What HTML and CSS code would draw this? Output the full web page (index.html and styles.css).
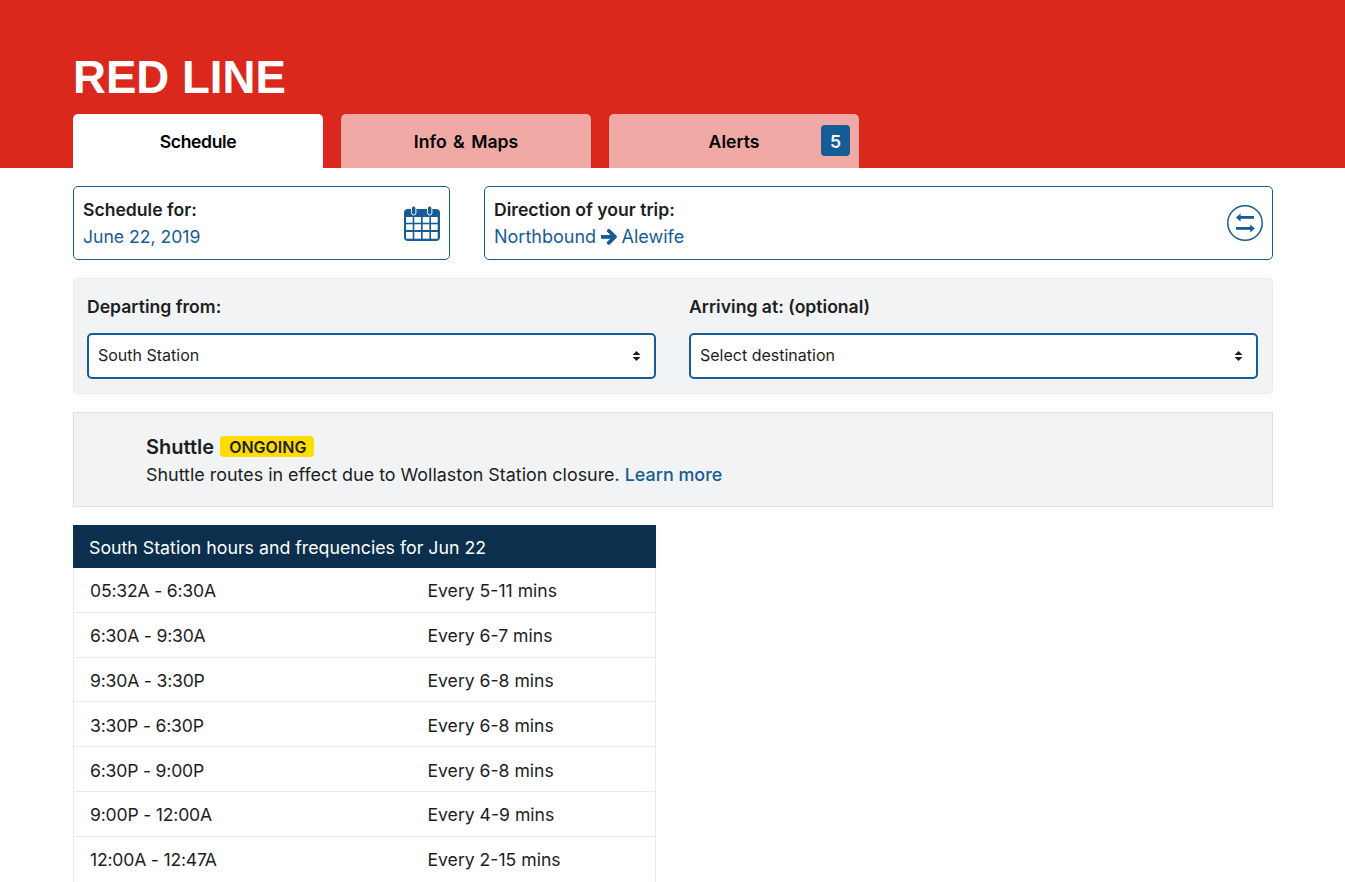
FILE: index.html

```html
<!DOCTYPE html>
<html lang="en">
<head>
    <meta charset="UTF-8">
    <meta name="viewport" content="width=device-width, initial-scale=1.0">
    <title>Red Line</title>
    <link rel="stylesheet" href="styles.css">
</head>
<body>
    <header class="header">
        <div class="wrap">
            <h1 class="title">RED LINE</h1>
            <nav class="tabs">
                <a class="tab tab-active">Schedule</a>
                <a class="tab">Info &amp; Maps</a>
                <a class="tab">Alerts<span class="tab-badge">5</span></a>
            </nav>
        </div>
    </header>
    <main class="wrap">
        <div class="pickers">
            <div class="picker picker-date">
                <div>
                    <div class="picker-label">Schedule for:</div>
                    <div class="picker-value">June 22, 2019</div>
                </div>
                <svg width="36" height="37" viewBox="0 0 36 37">
                    <rect x="0" y="4" width="36" height="32" rx="4" fill="#165c96"/>
                    <g fill="#fff">
                        <rect x="2" y="12" width="6.7" height="5.7"/>
                        <rect x="10.3" y="12" width="6.7" height="5.7"/>
                        <rect x="18.7" y="12" width="6.7" height="5.7"/>
                        <rect x="27" y="12" width="6.7" height="5.7"/>
                        <rect x="2" y="19.3" width="6.7" height="5.7"/>
                        <rect x="10.3" y="19.3" width="6.7" height="5.7"/>
                        <rect x="18.7" y="19.3" width="6.7" height="5.7"/>
                        <rect x="27" y="19.3" width="6.7" height="5.7"/>
                        <rect x="2" y="27" width="6.7" height="6.7"/>
                        <rect x="10.3" y="27" width="6.7" height="6.7"/>
                        <rect x="18.7" y="27" width="6.7" height="6.7"/>
                        <rect x="27" y="27" width="6.7" height="6.7"/>
                    </g>
                    <rect x="7.5" y="1" width="4.4" height="9" rx="2.2" fill="#165c96" stroke="#fff" stroke-width="1"/>
                    <rect x="23.5" y="1" width="4.4" height="9" rx="2.2" fill="#165c96" stroke="#fff" stroke-width="1"/>
                </svg>
            </div>
            <div class="picker picker-direction">
                <div>
                    <div class="picker-label">Direction of your trip:</div>
                    <div class="picker-value">Northbound
                        <svg class="icon-arrow" width="15.4" height="17.6" viewBox="0 0 448 512"><path fill="#165c96" stroke="#165c96" stroke-width="30" d="M190.5 66.9l22.2-22.2c9.4-9.4 24.6-9.4 33.9 0L441 239c9.4 9.4 9.4 24.6 0 33.9L246.6 467.3c-9.4 9.4-24.6 9.4-33.9 0l-22.2-22.2c-9.5-9.5-9.3-25 .4-34.3L311.4 296H24c-13.3 0-24-10.7-24-24v-32c0-13.3 10.7-24 24-24h287.4L190.9 101.2c-9.8-9.3-10-24.8-.4-34.3z"/></svg>
                        Alewife</div>
                </div>
                <svg width="36" height="36" viewBox="0 0 36 36">
                    <circle cx="18" cy="18" r="17.2" fill="none" stroke="#165c96" stroke-width="1.5"/>
                    <path d="M12 11h15v2.8H12z" fill="#165c96"/>
                    <path d="M9 12.4l4.6-4v8z" fill="#165c96"/>
                    <path d="M9 22h15v2.8H9z" fill="#165c96"/>
                    <path d="M27.8 23.4l-4.6-4v8z" fill="#165c96"/>
                </svg>
            </div>
        </div>

        <div class="stops">
            <div class="stop">
                <label class="stop-label" for="from">Departing from:</label>
                <div class="select">
                    <span id="from">South Station</span>
                    <svg width="9" height="12" viewBox="0 0 9 12"><path d="M4.5 1L8.5 5H.5zM4.5 11L.5 7h8z" fill="#1c1e23"/></svg>
                </div>
            </div>
            <div class="stop">
                <label class="stop-label" for="to">Arriving at: (optional)</label>
                <div class="select">
                    <span id="to">Select destination</span>
                    <svg width="9" height="12" viewBox="0 0 9 12"><path d="M4.5 1L8.5 5H.5zM4.5 11L.5 7h8z" fill="#1c1e23"/></svg>
                </div>
            </div>
        </div>

        <div class="alert">
            <div class="alert-head">Shuttle <span class="alert-tag">ONGOING</span></div>
            <div class="alert-text">Shuttle routes in effect due to Wollaston Station closure. <a class="alert-link">Learn more</a></div>
        </div>

        <table class="hours">
            <colgroup>
                <col class="hours-time">
                <col>
            </colgroup>
            <thead>
                <tr><th colspan="2">South Station hours and frequencies for Jun 22</th></tr>
            </thead>
            <tbody>
                <tr><td>05:32A - 6:30A</td><td>Every 5-11 mins</td></tr>
                <tr><td>6:30A - 9:30A</td><td>Every 6-7 mins</td></tr>
                <tr><td>9:30A - 3:30P</td><td>Every 6-8 mins</td></tr>
                <tr><td>3:30P - 6:30P</td><td>Every 6-8 mins</td></tr>
                <tr><td>6:30P - 9:00P</td><td>Every 6-8 mins</td></tr>
                <tr><td>9:00P - 12:00A</td><td>Every 4-9 mins</td></tr>
                <tr><td>12:00A - 12:47A</td><td>Every 2-15 mins</td></tr>
            </tbody>
        </table>
    </main>
</body>
</html>
```

FILE: styles.css

```css
* {
    box-sizing: border-box;
}
body {
    margin: 0;
    font-family: Inter, "Liberation Sans", sans-serif;
    font-size: 17.6px;
    line-height: 1.5;
    color: #1c1e23;
    background-color: #fff;
}
.wrap {
    width: 1200px;
    margin-left: 73px;
}
.header {
    height: 168px;
    padding-top: 48px;
    background-color: #da291c;
}
.title {
    margin: 0;
    height: 66px;
    font-family: "Liberation Sans", Arial, sans-serif;
    font-size: 45.6px;
    line-height: 59px;
    font-weight: 700;
    color: #fff;
}
.tabs {
    display: flex;
    gap: 18px;
}
.tab {
    position: relative;
    width: 250px;
    height: 54px;
    border-radius: 5px 5px 0 0;
    background-color: #f1a9a5;
    color: #000;
    font-weight: 600;
    line-height: 56px;
    text-align: center;
    word-spacing: 2px;
}
.tab-active {
    background-color: #fff;
    letter-spacing: -0.4px;
}
.tab-badge {
    position: absolute;
    top: 11px;
    right: 9px;
    width: 29px;
    height: 31px;
    border-radius: 4px;
    background-color: #165c96;
    color: #fff;
    line-height: 33px;
    text-align: center;
}
.pickers {
    display: flex;
    gap: 34px;
    margin-top: 18px;
}
.picker {
    display: flex;
    align-items: center;
    justify-content: space-between;
    height: 74px;
    padding: 0 9px;
    border: 1px solid #165c96;
    border-radius: 5px;
}
.picker-date {
    width: 377px;
}
.picker-direction {
    flex: 1;
}
.picker-label {
    font-weight: 600;
    line-height: 27px;
}
.picker-value {
    color: #165c96;
    line-height: 27px;
}
.picker-direction .picker-value {
    font-size: 18px;
}
.icon-arrow {
    vertical-align: -3px;
}
.stops {
    display: flex;
    gap: 33px;
    height: 116px;
    margin-top: 18px;
    padding: 14px 14px 0 13px;
    border: 1px solid #e9ebee;
    border-radius: 4px;
    background-color: #f2f3f5;
}
.stop {
    flex: 1;
}
.stop-label {
    display: block;
    margin-bottom: 13px;
    font-weight: 600;
    line-height: 27px;
}
.select {
    display: flex;
    align-items: center;
    justify-content: space-between;
    height: 46px;
    padding: 0 13px 2px 9px;
    border: 2px solid #165c96;
    border-radius: 5px;
    background-color: #fff;
    font-size: 16px;
}
.select svg {
    margin-top: 2px;
}
.alert {
    height: 95px;
    margin-top: 18px;
    padding: 20px 72px 0;
    border: 1px solid #dcdfe8;
    background-color: #f2f3f5;
}
.alert-head {
    font-size: 20px;
    font-weight: 600;
    line-height: 28px;
}
.alert-tag {
    display: inline-block;
    height: 21px;
    margin-left: 1px;
    padding: 0 8px 0 9px;
    border-radius: 4px;
    background-color: #ffdd00;
    font-size: 16px;
    line-height: 22px;
    vertical-align: 1px;
}
.alert-text {
    font-size: 17.92px;
    line-height: 28px;
}
.alert-link {
    color: #165c96;
    font-weight: 500;
}
.hours {
    width: 583px;
    margin-top: 18px;
    border-collapse: collapse;
    table-layout: fixed;
}
.hours-time {
    width: 338px;
}
.hours th {
    height: 42px;
    padding: 4px 15px 0;
    border: 1px solid #0b2f4c;
    background-color: #0b2f4c;
    color: #fff;
    font-size: 17.75px;
    font-weight: 400;
    text-align: left;
}
.hours td {
    height: 44.8px;
    padding: 10.4px 16px 0;
    border: 1px solid #e9ebf0;
    line-height: 26px;
    vertical-align: top;
}
.hours td:first-child {
    border-right: 0;
    letter-spacing: -0.2px;
}
.hours td:last-child {
    border-left: 0;
}
.hours tr:last-child td {
    height: 47px;
}
```
